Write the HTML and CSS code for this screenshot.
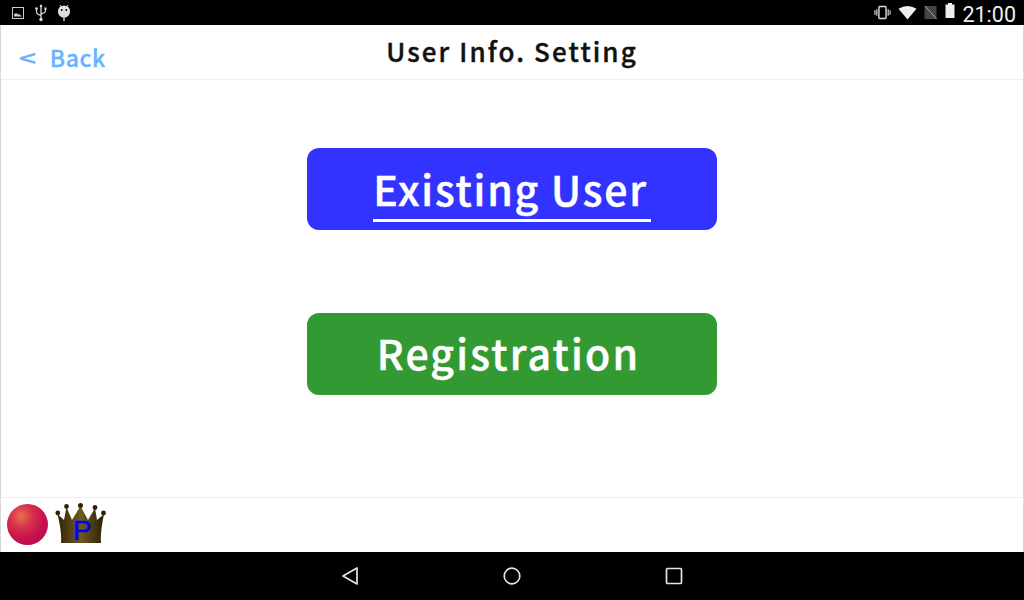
FILE: index.html
```html
<!DOCTYPE html>
<html>
<head>
    <title>User Info. Setting</title>
    <link rel="stylesheet" href="styles.css">
</head>
<body>
    <div class="statusBar">
        <div class="statusLeft">
            <svg class="statusIcon" width="14" height="14" viewBox="0 0 14 14">
                <rect x="1.5" y="1.5" width="11" height="11" fill="none" stroke="#ccc" stroke-width="1"/>
                <path d="M3 10.5 L3 8.5 L5 7 L7 8.5 L8 8 L11 10.5 Z" fill="#ccc"/>
            </svg>
            <svg class="statusIcon" width="14" height="18" viewBox="0 0 14 18">
                <path d="M7 1 L7 15" stroke="#ddd" stroke-width="1.3"/>
                <path d="M7 0 L5.5 3 L8.5 3 Z" fill="#ddd"/>
                <path d="M2.5 5 L2.5 8 Q2.5 10 7 11.5 M11.5 5 L11.5 7 Q11.5 8.5 7 10" fill="none" stroke="#ddd" stroke-width="1.2"/>
                <circle cx="2.5" cy="4.5" r="1.3" fill="#ddd"/>
                <rect x="10.4" y="3.5" width="2.2" height="2.2" fill="#ddd"/>
                <circle cx="7" cy="15.5" r="1.7" fill="#ddd"/>
            </svg>
            <svg class="statusIcon" width="14" height="18" viewBox="0 0 14 18">
                <path d="M3 1 L4.5 3.5 M11 1 L9.5 3.5" stroke="#ddd" stroke-width="1"/>
                <path d="M1 7 A6 5.5 0 0 1 13 7 L13 8 A6 5.5 0 0 1 1 8 Z" fill="#ddd"/>
                <circle cx="4.7" cy="6" r="0.9" fill="#000"/>
                <circle cx="9.3" cy="6" r="0.9" fill="#000"/>
                <rect x="6.3" y="13" width="1.4" height="4" fill="#ddd"/>
            </svg>
        </div>
        <div class="statusRight">
            <svg width="17" height="15" viewBox="0 0 18 15">
                <rect x="5.2" y="1.2" width="7.6" height="12.6" rx="1" fill="none" stroke="#ddd" stroke-width="1.5"/>
                <path d="M3 4 L3 11 M1 5 L1 10 M15 4 L15 11 M17 5 L17 10" stroke="#ddd" stroke-width="1.2"/>
            </svg>
            <svg width="19" height="15" viewBox="0 0 19 15">
                <path d="M0.5 3.8 Q9.5 -1.8 18.5 3.8 L9.5 14.5 Z" fill="#eee"/>
            </svg>
            <svg width="13" height="15" viewBox="0 0 13 15">
                <path d="M12.5 1 L12.5 14 L0.5 14 L0.5 1 Z" fill="#444"/>
                <path d="M1 1 L12.5 14" stroke="#aaa" stroke-width="1"/>
            </svg>
            <svg class="battery" width="10" height="15" viewBox="0 0 10 15">
                <path d="M3 0 L7 0 L7 1.5 L9.5 1.5 L9.5 15 L0.5 15 L0.5 1.5 L3 1.5 Z" fill="#eee"/>
            </svg>
            <span class="clock">21:00</span>
        </div>
    </div>

    <div class="screen">
        <div class="header">
            <a class="backLink"><span class="backArrow">&lt;</span><span>Back</span></a>
            <h1>User Info. Setting</h1>
        </div>

        <div class="content">
            <button class="bigButton existing"><span>Existing User</span></button>
            <button class="bigButton registration"><span>Registration</span></button>
        </div>

        <div class="footer">
            <div class="ball"></div>
            <div class="crown">
                <svg width="52" height="42" viewBox="0 0 52 42">
                    <defs>
                        <linearGradient id="crownFill" x1="0" y1="0" x2="1" y2="0">
                            <stop offset="0" stop-color="#2f2306"/>
                            <stop offset="0.5" stop-color="#6e5a20"/>
                            <stop offset="1" stop-color="#2a1f05"/>
                        </linearGradient>
                    </defs>
                    <path d="M6 40 Q7 30 2.5 11 L9 17 L11.5 4 L17 17 L25.5 3 L33 17 L40 5 L42 17 L49 11 Q45 30 46 40 Z" fill="url(#crownFill)"/>
                    <circle cx="2.8" cy="10" r="2.4" fill="#2f2306"/>
                    <circle cx="11.5" cy="3.5" r="2.4" fill="#2f2306"/>
                    <circle cx="25.5" cy="2.5" r="2.5" fill="#2f2306"/>
                    <circle cx="40" cy="4.5" r="2.4" fill="#2f2306"/>
                    <circle cx="48.5" cy="10" r="2.4" fill="#2f2306"/>
                </svg>
                <span class="crownLetter">P</span>
            </div>
        </div>
    </div>

    <div class="navBar">
        <svg width="18" height="20" viewBox="0 0 18 20">
            <path d="M16 2 L16 18 L2 10 Z" fill="none" stroke="#e4e4e4" stroke-width="1.7" stroke-linejoin="round"/>
        </svg>
        <svg width="20" height="20" viewBox="0 0 20 20">
            <circle cx="10" cy="10" r="7.8" fill="none" stroke="#e4e4e4" stroke-width="1.7"/>
        </svg>
        <svg width="18" height="18" viewBox="0 0 18 18">
            <rect x="1.5" y="1.5" width="15" height="15" rx="1" fill="none" stroke="#e4e4e4" stroke-width="1.7"/>
        </svg>
    </div>
</body>
</html>
```
FILE: styles.css
```css
body {
    font-family: "Noto Sans CJK JP", "Noto Sans", Arial, sans-serif;
    margin: 0;
    width: 1024px;
    height: 600px;
    display: flex;
    flex-direction: column;
    overflow: hidden;
    background-color: #ffffff;
}

.statusBar {
    height: 25px;
    background-color: #000000;
    display: flex;
    justify-content: space-between;
    align-items: center;
    padding: 0 8px 0 11px;
}

.statusLeft {
    display: flex;
    align-items: center;
    gap: 9px;
}

.statusRight {
    display: flex;
    align-items: center;
    gap: 7px;
}

.battery {
    margin-left: 1px;
    margin-top: -4px;
}

.clock {
    font-family: Roboto, Arial, sans-serif;
    font-size: 21.5px;
    color: #eeeeee;
    margin-top: 4px;
}

.screen {
    flex: 1;
    display: flex;
    flex-direction: column;
    border-left: 1px solid #d8d8d8;
    border-right: 1px solid #d8d8d8;
}

.header {
    height: 54px;
    border-bottom: 1px solid #eeeeee;
    display: flex;
    align-items: center;
    justify-content: center;
    position: relative;
}

h1 {
    margin: 0 0 4px 0;
    font-size: 26px;
    font-weight: 500;
    letter-spacing: 2.1px;
    color: #111111;
    -webkit-text-stroke: 0.4px #111111;
}

.backLink {
    position: absolute;
    left: 0;
    top: 0;
    width: 113px;
    height: 54px;
    background-color: #ffffff;
    box-sizing: border-box;
    padding: 14px 0 0 20px;
    display: flex;
    gap: 15px;
    font-size: 23px;
    font-weight: 500;
    letter-spacing: 0.6px;
    line-height: 36px;
    color: #66b3ff;
    -webkit-text-stroke: 0.3px #66b3ff;
}

.backArrow {
    transform: scaleX(1.3);
}

.content {
    flex: 1;
    display: flex;
    flex-direction: column;
    align-items: center;
    gap: 82.5px;
    padding-top: 68px;
}

.bigButton {
    width: 410px;
    height: 82px;
    border: none;
    border-radius: 12px;
    padding: 0;
    color: #ffffff;
    font-family: "Noto Sans CJK JP", "Noto Sans", Arial, sans-serif;
    font-size: 41px;
    font-weight: 500;
    letter-spacing: 1.8px;
    -webkit-text-stroke: 0.5px #ffffff;
}

.existing {
    background-color: #3333ff;
}

.existing span {
    display: inline-block;
    line-height: 50px;
    padding: 0 3px 6px 0;
    border-bottom: 3px solid #ffffff;
    margin-top: 6px;
}

.registration {
    background-color: #339933;
}

.registration span {
    display: inline-block;
    margin: 0 7px 4px 0;
    letter-spacing: 2.2px;
}

.footer {
    height: 54px;
    border-top: 1px solid #eeeeee;
    display: flex;
    align-items: center;
    padding-left: 6px;
    gap: 7px;
}

.ball {
    width: 41px;
    height: 41px;
    margin-top: -2px;
    border-radius: 50%;
    background: radial-gradient(circle at 35% 30%, #e8704a 0%, #d62f4c 30%, #c60f50 60%, #b80c50 100%);
}

.crown {
    position: relative;
    width: 52px;
    height: 42px;
    margin-top: -2px;
}

.crownLetter {
    position: absolute;
    left: 18px;
    top: 12px;
    font-family: "Liberation Sans", Arial, sans-serif;
    font-size: 28px;
    line-height: 32px;
    color: #0000ff;
    -webkit-text-stroke: 0.5px #0000ff;
}

.navBar {
    height: 48px;
    background-color: #000000;
    display: flex;
    justify-content: center;
    align-items: center;
    gap: 143px;
}
```
